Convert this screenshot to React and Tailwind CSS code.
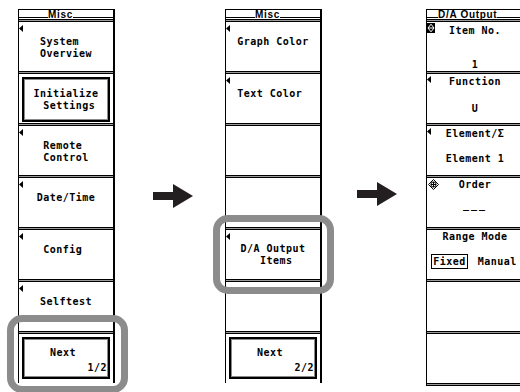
import React from "react";

const F =
  "font-['DejaVu_Sans_Mono',monospace] font-bold text-[10px] leading-[12px] tracking-[0.5px] text-black";
const H =
  "font-['Liberation_Sans',Arial,sans-serif] font-bold text-[10px] leading-[9px] tracking-[0.7px] text-black";

function Tri({ top = "top-[3px]" }) {
  return (
    <svg className={"absolute left-0 " + top} width="4" height="7" viewBox="0 0 4 7">
      <polygon points="4,0 4,7 0,3.5" fill="#000" />
    </svg>
  );
}

function Sep() {
  return <div className="h-[3px] border-y border-black bg-[#9a9a9a]" />;
}

function Lines({ lines, cls = "" }) {
  return (
    <div className={F + " text-center whitespace-pre " + cls}>
      {lines.map((l, i) => (
        <div key={i}>{l}</div>
      ))}
    </div>
  );
}

function Btn({ tri, lines, pt = "pt-[14px]" }) {
  return (
    <div className={"relative h-[49px] " + pt}>
      {tri && <Tri />}
      {lines && <Lines lines={lines} />}
    </div>
  );
}

function BoxBtn({ lines }) {
  return (
    <div className="h-[49px] pt-[3px] pb-[1px] px-[3px]">
      <div className="h-full border-2 border-black shadow-[inset_0_0_0_1px_#8a8a8a] pt-[9px]">
        <div className={F + " text-center whitespace-pre leading-[12.5px]"}>
          {lines.map((l, i) => (
            <div key={i}>{l}</div>
          ))}
        </div>
      </div>
    </div>
  );
}

function NextBtn({ page }) {
  return (
    <div className="h-[49px] pt-[3px] pb-[4px] px-[3px]">
      <div className="h-full border-2 border-black shadow-[inset_0_0_0_1px_#8a8a8a] pt-[8px] flex flex-col">
        <div className={F + " text-center pr-[6px]"}>Next</div>
        <div className={F + " text-right mt-[3px] pr-[1px]"}>{page}</div>
      </div>
    </div>
  );
}

function Panel({ title, leftW, children, bottomSep, edge }) {
  const items = React.Children.toArray(children);
  const frame = edge
    ? "w-[120px] shrink-0 self-start mt-[9px] border-t border-l border-black flex flex-col"
    : "w-[97px] shrink-0 self-start mt-[9px] border-t border-l border-r-2 border-black flex flex-col";
  return (
    <div className={frame}>
      <div className="h-[9px] flex items-end">
        <div className={"h-px bg-black mb-[1px] shrink-0 " + leftW} />
        <div className={H + " shrink-0 whitespace-pre"}>{title}</div>
        <div className="h-px bg-black mb-[1px] flex-1" />
      </div>
      {items.map((c, i) => (
        <React.Fragment key={i}>
          <Sep />
          {c}
        </React.Fragment>
      ))}
      {bottomSep && <Sep />}
    </div>
  );
}

function Arrow() {
  return (
    <svg width="40" height="24" viewBox="0 0 40 24">
      <path d="M0 8H20V0L40 12L20 24V16H0Z" fill="#231f20" />
    </svg>
  );
}

function UpDownIcon() {
  return (
    <svg className="absolute left-0 top-[1px]" width="8" height="10" viewBox="0 0 8 10">
      <rect x="0" y="0" width="8" height="10" fill="#000" />
      <polygon points="4,1.2 7,5 4,8.8 1,5" fill="none" stroke="#fff" strokeWidth="1" />
      <path d="M1 5H7" stroke="#fff" strokeWidth="1" />
    </svg>
  );
}

function OrderIcon() {
  return (
    <svg className="absolute left-[1px] top-[1px]" width="11" height="11" viewBox="0 0 11 11">
      <polygon points="5.5,0.5 10.5,5.5 5.5,10.5 0.5,5.5" fill="none" stroke="#000" />
      <circle cx="5.5" cy="5.5" r="2.6" fill="#fff" stroke="#000" />
      <path d="M5.5 3V8M3 5.5H8" stroke="#000" />
    </svg>
  );
}

const P3 = "w-[96px]";

export default function App() {
  return (
    <div className="relative w-[520px] h-[392px] bg-white overflow-hidden flex">
      <div className="w-[18px] shrink-0" />

      <Panel title="Misc" leftW="w-[29px]">
        <Btn tri lines={["System  ", "Overview"]} />
        <BoxBtn lines={["Initialize", " Settings"]} />
        <Btn tri lines={["Remote ", "Control"]} />
        <Btn tri lines={["Date/Time"]} />
        <Btn tri lines={["Config "]} />
        <Btn tri lines={["Selftest"]} />
        <NextBtn page="1/2" />
      </Panel>

      <div className="w-[110px] shrink-0 pt-[184px] pl-[38px]">
        <Arrow />
      </div>

      <Panel title="Misc" leftW="w-[29px]">
        <Btn tri lines={["Graph Color"]} />
        <Btn tri lines={["Text Color "]} />
        <Btn />
        <Btn />
        <Btn tri lines={["D/A Output", "   Items  "]} pt="pt-[13px]" />
        <Btn />
        <NextBtn page="2/2" />
      </Panel>

      <div className="w-[104px] shrink-0 pt-[182px] pl-[35px]">
        <Arrow />
      </div>

      <Panel title="D/A Output" leftW="w-[11px]" bottomSep edge>
        <div className="relative h-[49px] pt-[3px]">
          <UpDownIcon />
          <div className={P3 + " " + F + " text-center"}>Item No.</div>
          <div className={P3 + " " + F + " text-center mt-[22px]"}>1</div>
        </div>
        <div className="relative h-[49px] pt-[2px]">
          <Tri top="top-[2px]" />
          <div className={P3 + " " + F + " text-center"}>Function</div>
          <div className={P3 + " " + F + " text-center mt-[15px]"}>U</div>
        </div>
        <div className="relative h-[49px] pt-[2px]">
          <Tri top="top-[2px]" />
          <div className={P3 + " " + F + " text-center"}>Element/Σ</div>
          <div className={P3 + " " + F + " text-center mt-[13px]"}>Element 1</div>
        </div>
        <div className="relative h-[49px] pt-[1px]">
          <OrderIcon />
          <div className={P3 + " " + F + " text-center"}>Order</div>
          <div className={P3 + " " + F + " text-center mt-[8px] tracking-[2px]"}>___</div>
        </div>
        <div className="relative h-[49px] pt-[1px]">
          <div className={P3 + " " + F + " text-center"}>Range Mode</div>
          <div className="w-[96px] flex justify-center items-center gap-[10px] mt-[11px] pr-[2px]">
            <div className={F + " border border-black px-[1px] leading-[13px]"}>Fixed</div>
            <div className={F}>Manual</div>
          </div>
        </div>
        <div className="h-[49px]" />
        <div className="h-[49px]" />
      </Panel>

      <div className="absolute left-[7px] top-[315px] w-[121px] h-[78px] border-[7px] border-[#8c8c8c] rounded-[15px]" />
      <div className="absolute left-[213px] top-[215px] w-[121px] h-[79px] border-[7px] border-[#8c8c8c] rounded-[15px]" />
    </div>
  );
}
